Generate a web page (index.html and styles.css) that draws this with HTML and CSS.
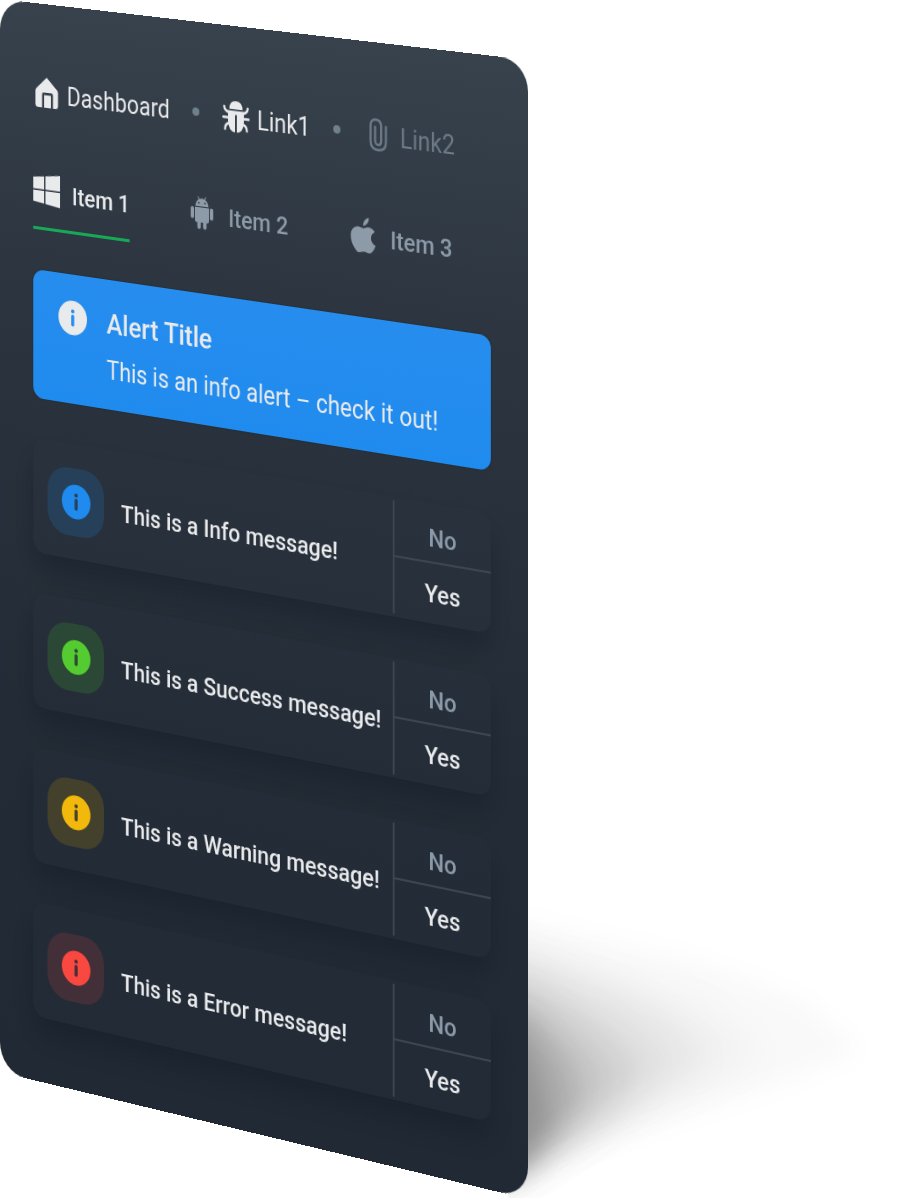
FILE: index.html
```html
<!DOCTYPE html>
<html lang="en">
<head>
<meta charset="utf-8">
<meta name="viewport" content="width=device-width, initial-scale=1">
<title>Dashboard</title>
<link rel="stylesheet" href="styles.css">
</head>
<body>
<svg class="symbols" aria-hidden="true">
  <symbol id="info" viewBox="0 0 34 34">
    <path fill="currentColor" fill-rule="evenodd" d="M17 0a17 17 0 1 1 0 34a17 17 0 1 1 0-34zM17 8.6a2 2 0 1 0 0 4a2 2 0 1 0 0-4zM15.2 15.6v8.200a1.800 1.800 0 0 0 3.600 0v-8.200a1.800 1.800 0 0 0-3.600 0z"/>
  </symbol>
</svg>
<main class="stage">
  <svg class="shade" viewBox="0 0 912 1198" aria-hidden="true">
    <defs>
      <clipPath id="floor"><rect x="508" y="860" width="404" height="338"/></clipPath>
      <filter id="b1" x="-30%" y="-30%" width="160%" height="160%"><feGaussianBlur stdDeviation="12"/></filter>
      <filter id="b2" x="-30%" y="-30%" width="160%" height="160%"><feGaussianBlur stdDeviation="18"/></filter>
      <filter id="b3" x="-60%" y="-30%" width="220%" height="160%"><feGaussianBlur stdDeviation="18"/></filter>
      <filter id="b4" x="-90%" y="-30%" width="280%" height="160%"><feGaussianBlur stdDeviation="12"/></filter>
    </defs>
    <g clip-path="url(#floor)">
      <path d="M440 900L540 925L700 962L800 1000L862 1050L790 1080L690 1115L528 1172L440 1180z" fill-opacity=".022" filter="url(#b1)"/>
      <path d="M440 915L580 965L700 1005L765 1055L690 1090L600 1132L520 1176L440 1185z" fill-opacity=".03" filter="url(#b2)"/>
      <path d="M440 930L560 970L650 1010L705 1060L650 1095L590 1132L520 1176L440 1185z" fill-opacity=".055" filter="url(#b2)"/>
      <path d="M440 950L545 990L615 1035L650 1070L615 1110L565 1145L510 1180L440 1190z" fill-opacity=".075" filter="url(#b3)"/>
      <path d="M440 960L530 1000L585 1045L610 1080L590 1115L545 1150L510 1180L440 1190z" fill-opacity=".085" filter="url(#b3)"/>
      <path d="M440 970L530 1015L565 1060L578 1100L560 1140L520 1174L440 1190z" fill-opacity=".11" filter="url(#b4)"/>
      <path d="M440 1000L525 1040L540 1080L548 1120L535 1160L510 1178L440 1190z" fill-opacity=".15" filter="url(#b4)"/>
    </g>
  </svg>

  <section class="panel">
    <nav class="links" aria-label="Breadcrumb">
      <a class="link" href="#dashboard">
        <svg class="icon" viewBox="0 0 32 32" aria-hidden="true"><path fill="currentColor" fill-rule="evenodd" d="M16 1L28.500 12.500Q29.500 13.500 29.500 15V28Q29.500 31 26.500 31H23.500V18Q23.500 16 21.500 16H12.500Q10.500 16 10.500 18V31H6Q2.500 31 2.500 28V15Q2.500 13.500 3.500 12.500zM13 18.500H21V31H13z"/></svg>
        <span class="label">Dashboard</span>
      </a>
      <span class="dot"></span>
      <a class="link" href="#link1">
        <svg class="icon" viewBox="0 0 32 32" aria-hidden="true"><path fill="currentColor" d="M8.500 9Q8.500 1 16 1T23.500 9zM7 10.500H25V21Q24.500 31 17 31.500V14.500H15V31.500Q7.500 31 7 21z"/><path fill="none" stroke="currentColor" stroke-width="2.400" stroke-linecap="round" d="M8.500 12.500Q3 11.500 2.500 7M23.500 12.500Q29 11.500 29.500 7M8 17.500H1.500M24 17.500H30.500M9 22.500Q3.500 24 3.500 29M23 22.500Q28.500 24 28.500 29"/></svg>
        <span class="label">Link1</span>
      </a>
      <span class="dot"></span>
      <a class="link link-muted" href="#link2">
        <svg class="icon" viewBox="0 0 32 32" aria-hidden="true"><path fill="none" stroke="currentColor" stroke-width="2.400" stroke-linecap="round" d="M24.500 8V22.500Q24.500 31 16 31T7.500 22.500V8Q7.500 2 13.300 2T19.200 8V22Q19.200 26 16 26T12.500 22V9"/></svg>
        <span class="label">Link2</span>
      </a>
    </nav>

    <div class="tabs">
      <button class="tab tab-active" type="button">
        <svg class="icon" viewBox="0 0 32 32" aria-hidden="true"><path fill="currentColor" d="M0 3L13 1.500V14.500H0zM14.500 1.300L32 -1V14.500H14.500zM0 16H13V28.500L0 27zM14.500 16H32V31L14.500 28.700z"/></svg>
        <span class="label">Item 1</span>
      </button>
      <button class="tab" type="button">
        <svg class="icon" viewBox="0 0 32 32" aria-hidden="true"><path fill="currentColor" fill-rule="evenodd" d="M8.500 10Q8.700 5.200 12.300 3.200L11 .8L11.800 .3L13.200 2.800Q16 1.800 18.800 2.800L20.200 .3L21 .8L19.700 3.200Q23.300 5.200 23.500 10zM12.500 5.800a.9 .9 0 1 0 0 1.800a.9 .9 0 1 0 0-1.800zM19.500 5.800a.9 .9 0 1 0 0 1.800a.9 .9 0 1 0 0-1.800z"/><path fill="currentColor" d="M8 11H24V24Q24 25.700 22.300 25.700H21.300V30.300a2 2 0 0 1-4 0V25.700H14.700V30.300a2 2 0 0 1-4 0V25.700H9.700Q8 25.700 8 24zM3 12.700a2 2 0 0 1 4 0V20.500a2 2 0 0 1-4 0zM25 12.700a2 2 0 0 1 4 0V20.500a2 2 0 0 1-4 0z"/></svg>
        <span class="label">Item 2</span>
      </button>
      <button class="tab" type="button">
        <svg class="icon" viewBox="0 0 32 32" aria-hidden="true"><path fill="currentColor" d="M22.500 -1Q23 5.500 16.200 7.500Q16 1 22.500 -1zM16.500 9.800C18 9.800 19.500 8 23 8.300Q27 8.700 29 12Q24.500 14.500 25 19Q25.300 23 30 25Q28 30.500 25 32.500Q22.500 33.700 20.200 32.500T14.500 32.500Q11 34 9 32.200Q2 25 2.500 17Q3.200 9.500 10 8.500C13 8.300 15 9.800 16.500 9.800z"/></svg>
        <span class="label">Item 3</span>
      </button>
    </div>

    <div class="alert" role="status">
      <svg class="info" aria-hidden="true"><use href="#info"/></svg>
      <div>
        <h2 class="alert-title">Alert Title</h2>
        <p class="alert-text">This is an info alert – check it out!</p>
      </div>
    </div>

    <div class="messages">
      <article class="message message-info">
        <span class="tile"><svg class="info" aria-hidden="true"><use href="#info"/></svg></span>
        <p class="message-text">This is a Info message!</p>
        <div class="actions"><button class="action action-no" type="button">No</button><button class="action" type="button">Yes</button></div>
      </article>
      <article class="message message-success">
        <span class="tile"><svg class="info" aria-hidden="true"><use href="#info"/></svg></span>
        <p class="message-text">This is a Success message!</p>
        <div class="actions"><button class="action action-no" type="button">No</button><button class="action" type="button">Yes</button></div>
      </article>
      <article class="message message-warning">
        <span class="tile"><svg class="info" aria-hidden="true"><use href="#info"/></svg></span>
        <p class="message-text">This is a Warning message!</p>
        <div class="actions"><button class="action action-no" type="button">No</button><button class="action" type="button">Yes</button></div>
      </article>
      <article class="message message-error">
        <span class="tile"><svg class="info" aria-hidden="true"><use href="#info"/></svg></span>
        <p class="message-text">This is a Error message!</p>
        <div class="actions"><button class="action action-no" type="button">No</button><button class="action" type="button">Yes</button></div>
      </article>
    </div>
  </section>
</main>
</body>
</html>
```
FILE: styles.css
```css
* { box-sizing: border-box; }

body {
  margin: 0;
  background: #fff;
  color: #e9eaec;
  font-family: Roboto, "Liberation Sans", sans-serif;
  font-size: 24px;
  line-height: 32px;
}

h2, p { margin: 0; }

button {
  padding: 0;
  border: 0;
  background: none;
  color: inherit;
  font: inherit;
  cursor: pointer;
}

.symbols { display: none; }

.stage {
  position: relative;
  overflow: hidden;
  padding-bottom: 125px;
}

/* Soft shadow cast on the floor behind the panel */
.shade {
  position: absolute;
  left: 0;
  bottom: 0;
  width: 912px;
}

/* The panel stands at an angle: its right side is nearer to the viewer */
.panel {
  position: relative;
  max-width: 600px;
  padding: 72px 40px 64px;
  border-radius: 30px;
  background: linear-gradient(#38424c, #2d3640 24%, #28313b 42%, #232c36 66%, #202934);
  transform-origin: 0 0;
  transform: matrix3d(0.829, 0.0958, 0, -0.0000967, 0, 1, 0, 0, 0, 0, 1, 0, 0, -1, 0, 1);
}

.icon {
  flex: none;
  width: 32px;
  height: 32px;
  overflow: visible;
}

.info {
  flex: none;
  width: 34px;
  height: 34px;
}

.label { padding-top: 4px; }

.links {
  display: flex;
  align-items: center;
  gap: 26px;
  height: 32px;
  margin-bottom: 64px;
  font-size: 25px;
}

.link {
  display: flex;
  align-items: center;
  gap: 8px;
  color: inherit;
  text-decoration: none;
}

.link-muted { color: #6c7986; }

.dot {
  width: 8px;
  height: 8px;
  border-radius: 50%;
  background: #71808d;
}

.tabs {
  display: flex;
  gap: 68px;
  height: 57px;
  margin-bottom: 40px;
}

.tab {
  display: flex;
  align-items: center;
  gap: 14px;
  padding-bottom: 18px;
  border-bottom: 3px solid transparent;
  color: #8d9ba9;
  font-weight: 500;
}

.tab-active {
  border-color: #18a957;
  color: #e9eaec;
}

.alert {
  display: flex;
  gap: 23px;
  margin-bottom: 40px;
  padding: 26px 30px 20px;
  border-radius: 12px;
  background: linear-gradient(#268dee, #208bee);
  box-shadow: 0 0 2px #20262c;
}

.alert-title {
  margin-bottom: 10px;
  font-size: 28px;
  font-weight: 500;
  line-height: 36px;
}

.alert-text {
  font-size: 25px;
  line-height: 36px;
}

.messages {
  display: grid;
  gap: 40px;
}

.message {
  display: flex;
  align-items: center;
  min-height: 114px;
  padding-left: 17px;
  border-radius: 14px;
  background: rgba(42, 49, 59, 0.15);
  box-shadow: 0 16px 28px rgba(16, 22, 34, 0.4);
  font-weight: 500;
}

.tile {
  display: grid;
  flex: none;
  place-items: center;
  width: 67px;
  height: 67px;
  margin-right: 20px;
  border-radius: 24px;
}

.message-info .tile { background: #26405a; color: #208bee; }
.message-success .tile { background: #2b4735; color: #54cb30; }
.message-warning .tile { background: #43412c; color: #f2b90c; }
.message-error .tile { background: #432f37; color: #f9483f; }

.message-text {
  flex: 1;
  padding-top: 8px;
  white-space: nowrap;
}

.actions {
  display: grid;
  grid-template-rows: 1fr 1fr;
  flex: none;
  align-self: stretch;
  width: 107px;
  margin: 3px 0;
  border-left: 2px solid #3d4650;
}

.action { padding-top: 4px; }

.action-no {
  padding-top: 8px;
  border-bottom: 2px solid #3d4650;
  color: #8b9aa9;
}
```
